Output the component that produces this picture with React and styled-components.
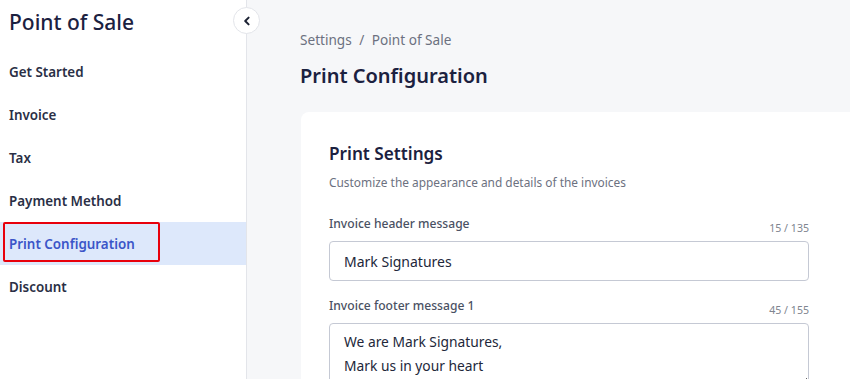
import styled, { createGlobalStyle } from 'styled-components';

const GlobalStyle = createGlobalStyle`
  * { box-sizing: border-box; }
  html, body { margin: 0; padding: 0; }
  body {
    font-family: 'Noto Sans', 'Open Sans', sans-serif;
    background: #f6f7f9;
    overflow: hidden;
  }
`;

const navItems = [
  { id: 1, label: 'Get Started' },
  { id: 2, label: 'Invoice' },
  { id: 3, label: 'Tax' },
  { id: 4, label: 'Payment Method' },
  { id: 5, label: 'Print Configuration', active: true },
  { id: 6, label: 'Discount' },
];

export default function App() {
  return (
    <>
      <GlobalStyle />
      <Page>
        <Sidebar>
          <SideTitle>Point of Sale</SideTitle>
          <Nav>
            {navItems.map(item => (
              <NavItem key={item.id} $active={item.active}>
                {item.label}
                {item.active && <Marker />}
              </NavItem>
            ))}
          </Nav>
          <Collapse aria-label="Collapse sidebar">
            <svg width="10" height="10" viewBox="0 0 10 10">
              <path
                d="M6.6 1.6 L3.2 5 L6.6 8.4"
                fill="none"
                stroke="#1c2233"
                strokeWidth="2"
                strokeLinecap="round"
                strokeLinejoin="round"
              />
            </svg>
          </Collapse>
        </Sidebar>

        <Main>
          <Breadcrumb>
            Settings <Sep>/</Sep> Point of Sale
          </Breadcrumb>
          <PageTitle>Print Configuration</PageTitle>

          <Card>
            <CardTitle>Print Settings</CardTitle>
            <CardText>Customize the appearance and details of the invoices</CardText>

            <Field>
              <LabelRow>
                <Label>Invoice header message</Label>
                <Counter>15 / 135</Counter>
              </LabelRow>
              <Input defaultValue="Mark Signatures" />
            </Field>

            <Field>
              <LabelRow>
                <Label>Invoice footer message 1</Label>
                <Counter>45 / 155</Counter>
              </LabelRow>
              <TextArea
                rows={3}
                defaultValue={'We are Mark Signatures,\nMark us in your heart'}
              />
            </Field>
          </Card>
        </Main>
      </Page>
    </>
  );
}

const Page = styled.div`
  display: flex;
  height: 100vh;
  overflow: hidden;
`;

const Sidebar = styled.aside`
  position: relative;
  width: 247px;
  flex-shrink: 0;
  background: #ffffff;
  border-right: 1px solid #e3e5ea;
  padding-top: 8px;
`;

const SideTitle = styled.h1`
  margin: 0;
  padding-left: 9px;
  font-size: 21px;
  line-height: 28px;
  font-weight: 500;
  color: #1b2140;
`;

const Nav = styled.ul`
  list-style: none;
  margin: 14px 0 0;
  padding: 0;
`;

const NavItem = styled.li`
  position: relative;
  display: flex;
  align-items: center;
  height: 43px;
  padding-left: 9px;
  font-size: 13.4px;
  font-weight: 600;
  color: ${p => (p.$active ? '#3b55c8' : '#2a2f45')};
  background: ${p => (p.$active ? '#dde8fb' : 'transparent')};
`;

const Marker = styled.span`
  position: absolute;
  left: 3px;
  top: 0;
  width: 157px;
  height: 40px;
  border: 2px solid #e8000b;
  border-radius: 2px;
`;

const Collapse = styled.button`
  position: absolute;
  top: 7px;
  right: -14px;
  width: 27px;
  height: 27px;
  padding: 0;
  border-radius: 50%;
  border: 1px solid #e3e5ea;
  background: #ffffff;
  display: flex;
  align-items: center;
  justify-content: center;
  cursor: pointer;
`;

const Main = styled.main`
  flex: 1;
  min-width: 0;
  padding: 30px 0 0 53px;
  overflow: hidden;
`;

const Breadcrumb = styled.div`
  font-size: 13.6px;
  line-height: 20px;
  color: #6c7180;
`;

const Sep = styled.span`
  margin: 0 4px;
`;

const PageTitle = styled.h2`
  margin: 12px 0 0;
  font-size: 20px;
  line-height: 28px;
  font-weight: 600;
  color: #1b2140;
`;

const Card = styled.section`
  margin: 22px 0 0 1px;
  width: 580px;
  background: #ffffff;
  border-radius: 8px;
  padding: 29px 28px 0;
  display: flex;
  flex-direction: column;
`;

const CardTitle = styled.h3`
  margin: 0;
  font-size: 17.2px;
  line-height: 26px;
  font-weight: 600;
  color: #1b2140;
`;

const CardText = styled.p`
  margin: 6px 0 0;
  font-size: 11.9px;
  line-height: 18px;
  color: #6c7180;
`;

const Field = styled.div`
  width: 480px;
  margin-top: 24px;
  & + & {
    margin-top: 16px;
  }
`;

const LabelRow = styled.div`
  display: flex;
  justify-content: space-between;
  align-items: flex-end;
  margin-bottom: 8px;
`;

const Label = styled.label`
  font-size: 12.1px;
  line-height: 18px;
  font-weight: 500;
  color: #4a5163;
`;

const Counter = styled.span`
  font-size: 10.6px;
  line-height: 14px;
  color: #80858f;
  margin-bottom: -2px;
`;

const Input = styled.input`
  display: block;
  width: 100%;
  height: 40px;
  padding: 0 14px;
  border: 1px solid #c5c9d4;
  border-radius: 4px;
  font-family: inherit;
  font-size: 14px;
  color: #22273a;
  background: #ffffff;
  outline: none;
`;

const TextArea = styled.textarea`
  display: block;
  width: 100%;
  height: 64px;
  padding: 6px 14px;
  border: 1px solid #c5c9d4;
  border-radius: 4px;
  font-family: inherit;
  font-size: 13.8px;
  line-height: 24px;
  color: #22273a;
  background: #ffffff;
  outline: none;
  resize: vertical;
`;
